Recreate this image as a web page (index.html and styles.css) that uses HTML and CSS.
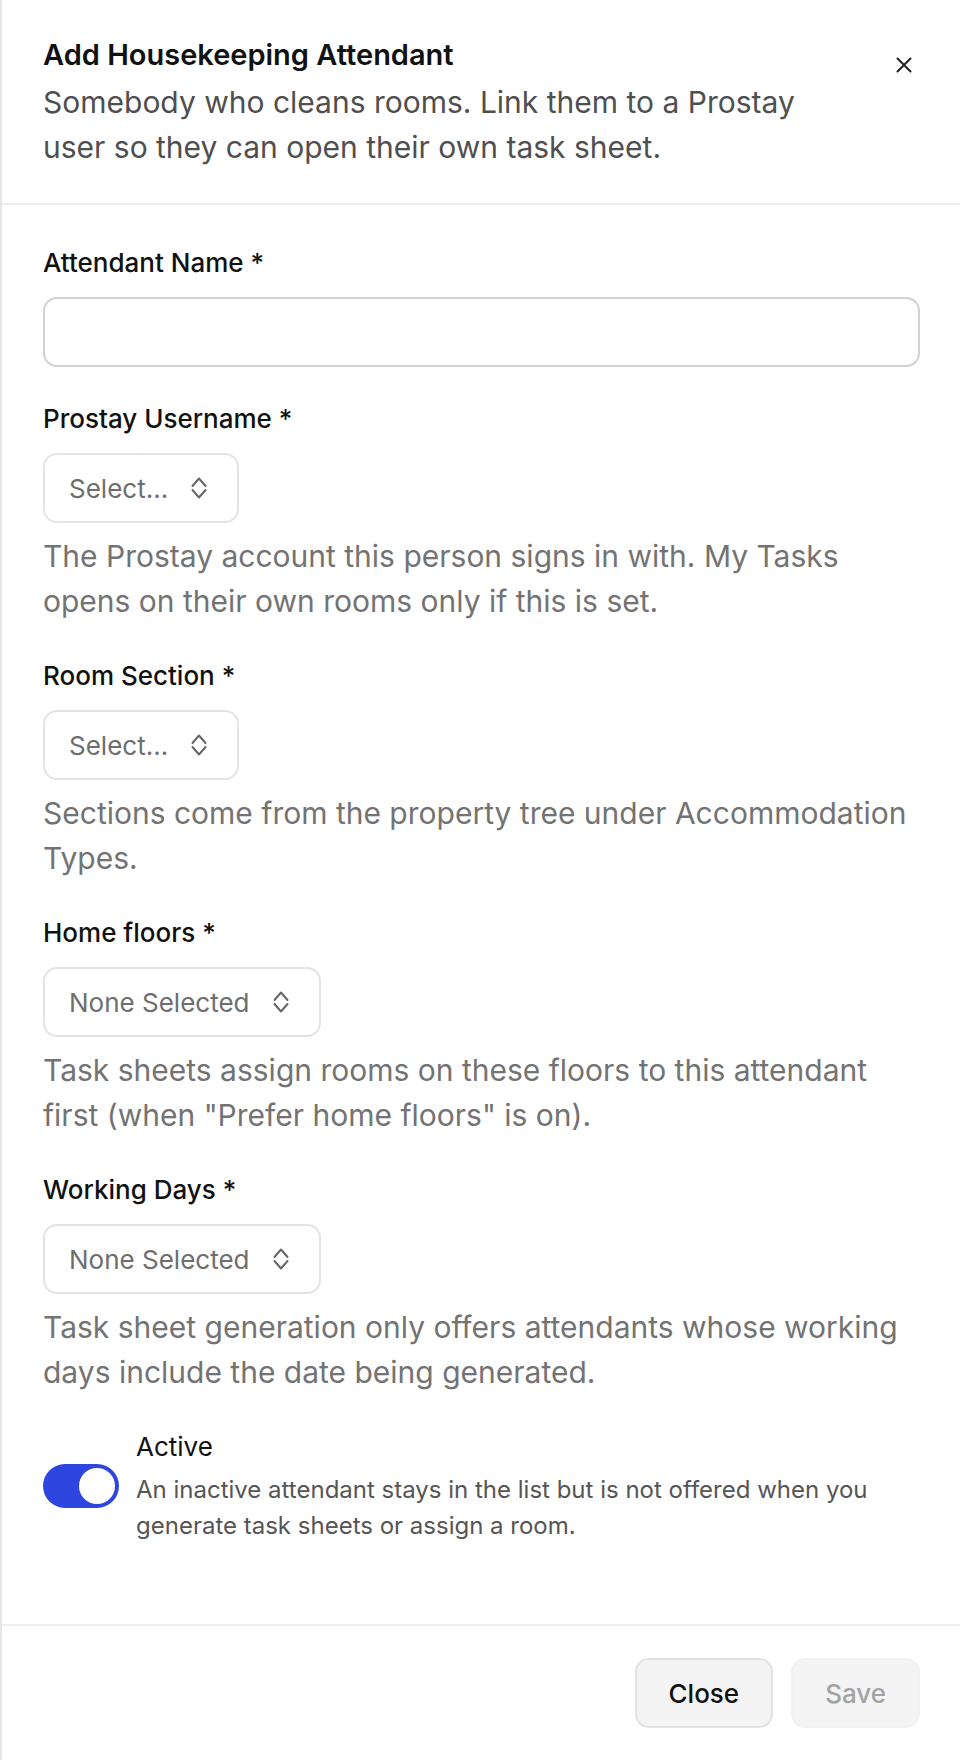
FILE: index.html
```html
<!DOCTYPE html>
<html lang="en">
<head>
    <meta charset="UTF-8">
    <meta name="viewport" content="width=device-width, initial-scale=1.0">
    <title>Add Housekeeping Attendant</title>
    <link rel="stylesheet" href="styles.css">
</head>
<body>
    <div class="sheet">
        <!-- Header -->
        <header class="sheet-header">
            <h1>Add Housekeeping Attendant</h1>
            <p>Somebody who cleans rooms. Link them to a Prostay user so they can open their own task sheet.</p>
            <button class="close-btn" type="button" aria-label="Close">
                <svg width="16" height="16" viewBox="0 0 16 16" fill="none" stroke="currentColor" stroke-width="2" stroke-linecap="round">
                    <path d="M1.5 1.5l13 13M14.5 1.5l-13 13"/>
                </svg>
            </button>
        </header>

        <!-- Form -->
        <form class="sheet-body">
            <div class="field">
                <label for="attendant-name">Attendant Name *</label>
                <input type="text" id="attendant-name" class="text-input">
            </div>

            <div class="field">
                <label>Prostay Username *</label>
                <button type="button" class="select-btn">
                    <span>Select...</span>
                    <svg class="chevrons" width="16" height="24" viewBox="0 0 16 24" fill="none" stroke="currentColor" stroke-width="2" stroke-linecap="round" stroke-linejoin="round">
                        <path d="M1.5 10L8 2.5l6.5 7.5M1.5 14L8 21.5l6.5-7.5"/>
                    </svg>
                </button>
                <p class="help">The Prostay account this person signs in with. My Tasks opens on their own rooms only if this is set.</p>
            </div>

            <div class="field">
                <label>Room Section *</label>
                <button type="button" class="select-btn">
                    <span>Select...</span>
                    <svg class="chevrons" width="16" height="24" viewBox="0 0 16 24" fill="none" stroke="currentColor" stroke-width="2" stroke-linecap="round" stroke-linejoin="round">
                        <path d="M1.5 10L8 2.5l6.5 7.5M1.5 14L8 21.5l6.5-7.5"/>
                    </svg>
                </button>
                <p class="help">Sections come from the property tree under Accommodation Types.</p>
            </div>

            <div class="field">
                <label>Home floors *</label>
                <button type="button" class="select-btn">
                    <span>None Selected</span>
                    <svg class="chevrons" width="16" height="24" viewBox="0 0 16 24" fill="none" stroke="currentColor" stroke-width="2" stroke-linecap="round" stroke-linejoin="round">
                        <path d="M1.5 10L8 2.5l6.5 7.5M1.5 14L8 21.5l6.5-7.5"/>
                    </svg>
                </button>
                <p class="help">Task sheets assign rooms on these floors to this attendant first (when "Prefer home floors" is on).</p>
            </div>

            <div class="field">
                <label>Working Days *</label>
                <button type="button" class="select-btn">
                    <span>None Selected</span>
                    <svg class="chevrons" width="16" height="24" viewBox="0 0 16 24" fill="none" stroke="currentColor" stroke-width="2" stroke-linecap="round" stroke-linejoin="round">
                        <path d="M1.5 10L8 2.5l6.5 7.5M1.5 14L8 21.5l6.5-7.5"/>
                    </svg>
                </button>
                <p class="help">Task sheet generation only offers attendants whose working days include the date being generated.</p>
            </div>

            <div class="switch-row">
                <span class="switch on"><span class="knob"></span></span>
                <div class="switch-text">
                    <div class="switch-label">Active</div>
                    <p class="switch-help">An inactive attendant stays in the list but is not offered when you generate task sheets or assign a room.</p>
                </div>
            </div>
        </form>

        <!-- Footer -->
        <footer class="sheet-footer">
            <button type="button" class="btn">Close</button>
            <button type="button" class="btn" disabled>Save</button>
        </footer>
    </div>
</body>
</html>
```

FILE: styles.css
```css
/* General Styles */
body {
    font-family: Inter, "Noto Sans", sans-serif;
    margin: 0;
    padding: 0;
    background-color: #fff;
    color: #111;
}

.sheet {
    min-height: 100vh;
    display: flex;
    flex-direction: column;
    border-left: 2px solid #e6e6e6;
    box-sizing: border-box;
}

/* Header */
.sheet-header {
    position: relative;
    padding: 37px 40px 33px 41px;
    border-bottom: 2px solid #eeeeee;
}

.sheet-header h1 {
    margin: 0 0 7px;
    font-size: 29px;
    line-height: 36px;
    font-weight: 600;
    color: #111;
}

.sheet-header p {
    margin: 0;
    max-width: 780px;
    font-size: 30px;
    line-height: 45px;
    color: #4f4f4f;
}

.close-btn {
    position: absolute;
    top: 57px;
    right: 48px;
    padding: 0;
    border: none;
    background: none;
    color: #222;
    cursor: pointer;
    display: flex;
}

/* Form */
.sheet-body {
    flex: 1;
    padding: 40px 40px 80px 41px;
}

.field {
    margin-bottom: 34px;
}

.field label {
    display: block;
    font-size: 26px;
    line-height: 36px;
    font-weight: 500;
    margin-bottom: 16px;
}

.text-input {
    display: block;
    width: 100%;
    height: 70px;
    box-sizing: border-box;
    border: 2px solid #d2d2d2;
    border-radius: 14px;
    padding: 0 24px;
    font: inherit;
    font-size: 26px;
}

.select-btn {
    display: inline-flex;
    align-items: center;
    gap: 23px;
    height: 70px;
    padding: 0 30px 0 24px;
    border: 2px solid #e4e4e4;
    border-radius: 14px;
    background: #fff;
    font-family: inherit;
    font-size: 26px;
    color: #6e6e6e;
    cursor: pointer;
}

.chevrons {
    color: #666;
}

.help {
    margin: 11px 0 0;
    font-size: 30px;
    line-height: 45px;
    color: #737373;
}

/* Active switch */
.switch-row {
    display: flex;
    gap: 17px;
}

.switch {
    flex: none;
    margin-top: 35px;
    width: 76px;
    height: 44px;
    border-radius: 22px;
    background-color: #2e45e0;
    position: relative;
}

.switch .knob {
    position: absolute;
    top: 4px;
    right: 4px;
    width: 36px;
    height: 36px;
    border-radius: 50%;
    background: #fff;
}

.switch-label {
    font-size: 26px;
    line-height: 36px;
    margin-bottom: 7px;
}

.switch-help {
    margin: 0;
    font-size: 24px;
    line-height: 36px;
    color: #555;
}

/* Footer */
.sheet-footer {
    display: flex;
    justify-content: flex-end;
    gap: 18px;
    padding: 32px 40px 33px;
    border-top: 2px solid #eeeeee;
}

.btn {
    height: 70px;
    padding: 0 32px;
    border: 2px solid #e2e2e2;
    border-radius: 14px;
    background-color: #f4f4f4;
    font-family: inherit;
    font-size: 26px;
    font-weight: 500;
    color: #111;
    cursor: pointer;
}

.btn:disabled {
    border-color: #f2f2f2;
    color: #a3a3a3;
    cursor: default;
}
```
